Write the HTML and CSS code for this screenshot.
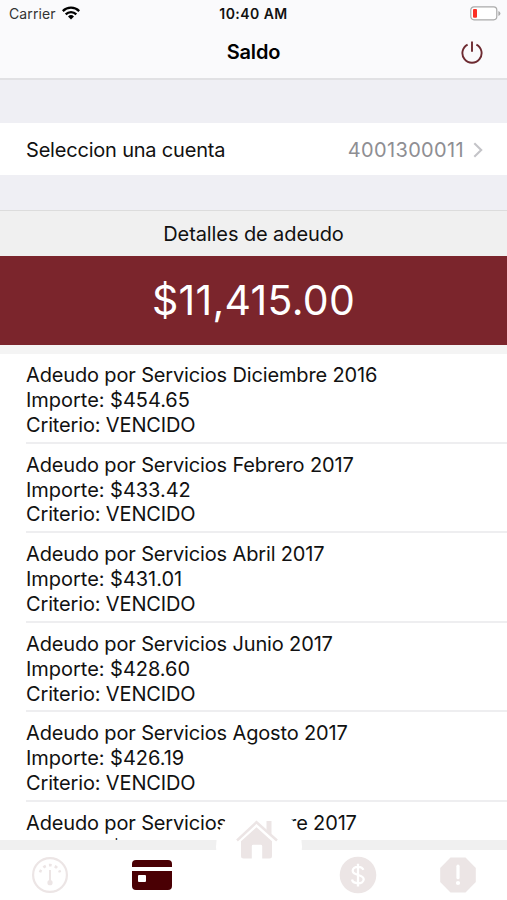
FILE: index.html
```
<!DOCTYPE html>
<html lang="es">
<head>
    <meta charset="UTF-8">
    <title>Saldo</title>
    <link rel="stylesheet" href="styles.css">
</head>
<body>
    <header class="header">
        <div class="status">
            <div class="carrier">
                <span class="carrier-name">Carrier</span>
                <svg width="18" height="14" viewBox="0 0 18 14">
                    <g fill="none" stroke="#000" stroke-width="2.3">
                        <path d="M.8 5.1a11.6 11.6 0 0 1 16.4 0"/>
                        <path d="M3.7 8.4a7.5 7.5 0 0 1 10.6 0"/>
                    </g>
                    <path d="M9 13.6l-3-3.1a4.300 4.300 0 0 1 6 0z"/>
                </svg>
            </div>
            <span class="time">10:40 AM</span>
            <svg class="battery" width="31" height="15" viewBox="0 0 31 15">
                <rect x=".8" y=".8" width="26" height="13" rx="3.2" fill="#fff" stroke="#aaa" stroke-width="1.2"/>
                <rect x="3" y="3" width="4" height="8.8" rx="1" fill="#fb3026"/>
                <path d="M28.4 5v5q2-.8 2-2.5t-2-2.5z" fill="#aaa"/>
            </svg>
        </div>
        <div class="navbar">
            <h1>Saldo</h1>
            <svg class="power" width="22" height="24" viewBox="0 0 22 24" fill="none" stroke="#6d2a31" stroke-width="1.9">
                <path d="M6.600 4.600a9.600 9.600 0 1 0 8.800 0M11 1.500v10.200"/>
            </svg>
        </div>
    </header>

    <div class="account">
        <span class="account-label">Seleccion una cuenta</span>
        <span class="account-number">4001300011</span>
        <svg width="10" height="16" viewBox="0 0 10 16" fill="none" stroke="#c4c4c8" stroke-width="2.1">
            <path d="M1.300 1.300L8.200 8l-6.900 6.700"/>
        </svg>
    </div>

    <h2>Detalles de adeudo</h2>
    <div class="total">$11,415.00</div>

    <ul class="list">
        <li><p>Adeudo por Servicios Diciembre 2016</p><p class="amount">Importe: $454.65</p><p>Criterio: VENCIDO</p></li>
        <li><p>Adeudo por Servicios Febrero 2017</p><p class="amount">Importe: $433.42</p><p>Criterio: VENCIDO</p></li>
        <li><p>Adeudo por Servicios Abril 2017</p><p class="amount">Importe: $431.01</p><p>Criterio: VENCIDO</p></li>
        <li><p>Adeudo por Servicios Junio 2017</p><p class="amount">Importe: $428.60</p><p>Criterio: VENCIDO</p></li>
        <li><p>Adeudo por Servicios Agosto 2017</p><p class="amount">Importe: $426.19</p><p>Criterio: VENCIDO</p></li>
        <li><p>Adeudo por Servicios Octubre 2017</p><p class="amount">Importe: $423.78</p></li>
    </ul>

    <nav class="tabs">
        <a href="#"><svg width="38" height="38" viewBox="0 0 38 38" fill="none" stroke="#ece5e5">
            <circle cx="19" cy="19" r="16.9" stroke-width="2.2"/>
            <path d="M9 16.4a10.5 10.5 0 0 1 20 0" stroke-width="2.6" stroke-dasharray="2.8 3.2"/>
            <path d="M19 14v11" stroke-width="2"/>
            <circle cx="19" cy="26.7" r="2.6" fill="#ece5e5" stroke="none"/>
        </svg></a>
        <a href="#"><svg width="42" height="32" viewBox="0 0 42 32" fill="#4a0004">
            <path d="M1 8V5q0-4 4-4h32q4 0 4 4v3z"/>
            <path fill-rule="evenodd" d="M1 12h40v15q0 4-4 4H5q-4 0-4-4zM8 16q-1 0-1 1v5q0 1 1 1h6q1 0 1-1v-5q0-1-1-1z"/>
        </svg></a>
        <a href="#" class="home"><svg width="42" height="40" viewBox="0 0 42 40">
            <path d="M1 20.5L20.5 2.2 41 20.5" fill="none" stroke="#ece5e5" stroke-width="2.5"/>
            <path d="M30.500 1h5v14l-5-4.700z" fill="#ece5e5"/>
            <path d="M20.5 7.3L36 21.2V36q0 2.5-2.5 2.5h-7.300V26.200q0-1.400-1.400-1.400h-7.600q-1.400 0-1.400 1.400v12.300H7.600Q5 38.500 5 36V21.200z" fill="#ece5e5"/>
        </svg></a>
        <a href="#"><svg width="38" height="38" viewBox="0 0 38 38">
            <circle cx="19" cy="19" r="18.300" fill="#ece5e5"/>
            <path d="M24.300 13.800c-.6-2-2.600-3-5.300-3-3.100 0-5.300 1.500-5.300 3.900 0 5.400 11 3.200 11 8.600 0 2.500-2.500 4-5.700 4s-5.500-1.300-6-3.700M19 7.800v22.600" fill="none" stroke="#fff" stroke-width="2.300"/>
        </svg></a>
        <a href="#"><svg width="38" height="38" viewBox="0 0 38 38">
            <path d="M11.500 1.500h15L36.800 12v14L26.500 36.500h-15L1.200 26V12z" fill="#ece5e5"/>
            <path d="M19 10.200v11.500" stroke="#fff" stroke-width="3.200" stroke-linecap="round"/>
            <circle cx="19" cy="27" r="2.100" fill="#fff"/>
        </svg></a>
    </nav>
</body>
</html>
```
FILE: styles.css
```
* {
    box-sizing: border-box;
}
body {
    margin: 0;
    height: 900px;
    display: flex;
    flex-direction: column;
    overflow: hidden;
    background-color: #efeff4;
    color: #111;
    font-family: Inter, "Liberation Sans", sans-serif;
    font-size: 20px;
    letter-spacing: -0.15px;
}
h1, h2, p, ul {
    margin: 0;
    padding: 0;
}
svg {
    display: block;
}
.header {
    flex: none;
    height: 80px;
    background-color: #fafafc;
    border-bottom: 2px solid #e1e1e4;
}
.status {
    display: grid;
    grid-template-columns: 1fr auto 1fr;
    align-items: center;
    height: 27px;
    padding: 0 6px;
    font-size: 14px;
    letter-spacing: 0.1px;
}
.carrier {
    display: flex;
    gap: 6px;
    padding-left: 3px;
    color: #333;
}
.carrier-name {
    line-height: 16px;
}
.time {
    font-weight: 600;
    letter-spacing: 0.45px;
    color: #111;
}
.battery {
    justify-self: end;
}
.navbar {
    display: grid;
    grid-template-columns: 1fr auto 1fr;
    align-items: center;
    height: 50px;
    padding: 0 24px;
}
h1 {
    grid-column: 2;
    font-size: 20px;
    font-weight: 600;
    color: #000;
}
.power {
    justify-self: end;
}
.account {
    flex: none;
    display: flex;
    align-items: center;
    height: 52px;
    margin: 43px 0 35px;
    padding: 1px 24px 0 26px;
    background-color: #fff;
}
.account-label {
    letter-spacing: -0.2px;
}
.account-number {
    margin-left: auto;
    margin-right: 9px;
    color: #8e8e93;
    letter-spacing: 0.35px;
}
h2 {
    flex: none;
    height: 46px;
    border-top: 1px solid #dcdcdc;
    background-color: #f0f0f0;
    font-size: 20px;
    font-weight: 400;
    line-height: 46px;
    letter-spacing: -0.1px;
    text-align: center;
}
.total {
    flex: none;
    height: 89px;
    background-color: #7b252c;
    color: #fff;
    font-size: 41px;
    line-height: 89px;
    letter-spacing: 0.3px;
    text-align: center;
}
.list {
    flex: 1;
    min-height: 0;
    overflow: hidden;
    border-top: 9px solid #f4f4f4;
    background-color: #fff;
    list-style: none;
}
.list li {
    height: 89.6px;
    margin-left: 26px;
    padding-top: 9px;
    border-bottom: 2px solid #eeeef0;
    line-height: 24.9px;
    white-space: nowrap;
}
.list .amount {
    letter-spacing: -0.03px;
}
.tabs {
    position: relative;
    flex: none;
    display: grid;
    grid-template-columns: 100px 103px 107px 96px 104px;
    grid-template-rows: 50px;
    align-items: center;
    justify-items: center;
    height: 60px;
    border-top: 10px solid #f0f0f0;
    background-color: #fff;
}
/* round button raised over the bar */
.home {
    position: relative;
    top: -28px;
    left: 2px;
    display: flex;
    align-items: center;
    justify-content: center;
    width: 86px;
    height: 86px;
    padding: 0 4px 14px 0;
    border-radius: 50%;
    background-color: #fff;
}
```
